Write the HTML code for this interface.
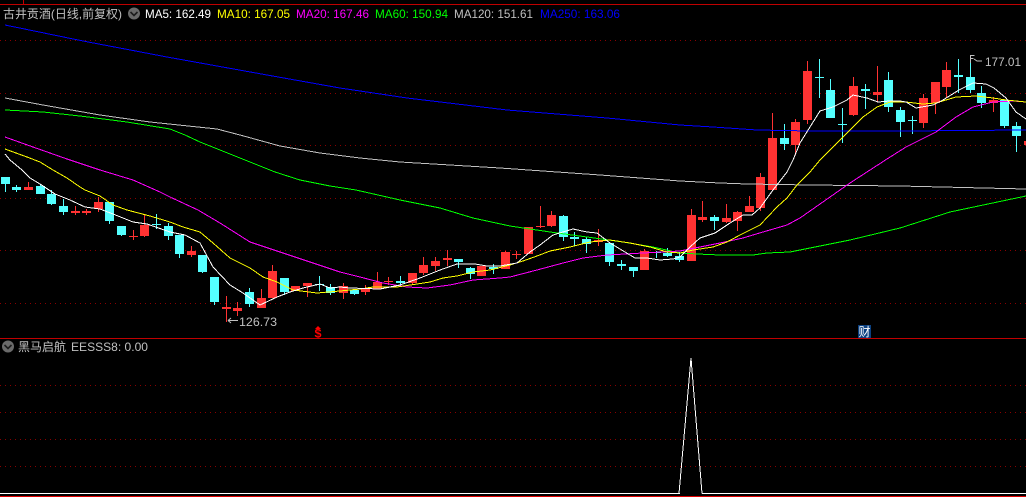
<!DOCTYPE html>
<html lang="zh">
<head>
<meta charset="utf-8">
<title>古井贡酒</title>
<style>
html,body{margin:0;padding:0;background:#000;width:1026px;height:497px;overflow:hidden}
svg{display:block;position:absolute;left:0;top:0}
text{font-family:"Liberation Sans","WenQuanYi Zen Hei","Noto Sans CJK SC",sans-serif;font-size:12px;white-space:pre}
.l{fill:none;stroke-width:1;shape-rendering:crispEdges}
</style>
</head>
<body>
<svg width="1026" height="497" viewBox="0 0 1026 497" xmlns="http://www.w3.org/2000/svg">
<rect width="1026" height="497" fill="#000"/>

<g stroke="#8a0000" stroke-width="1" stroke-dasharray="1 4" shape-rendering="crispEdges">
<path d="M0 40.5H1026M0 93.5H1026M0 145.5H1026M0 198.5H1026M0 250.5H1026M0 303.5H1026"/>
<path d="M0 385.5H1026M0 412.5H1026M0 439.5H1026M0 466.5H1026"/>
</g>

<g fill="#c00000" shape-rendering="crispEdges">
<rect x="0" y="4" width="1026" height="1"/>
<rect x="23" y="0" width="1" height="4"/>
<rect x="0" y="338" width="1026" height="1"/>
</g>

<path shape-rendering="crispEdges" fill="#54ffff" d="M1 177h9v7h-9zM5 177h1v15h-1zM12 187h9v3h-9zM16 185h1v7h-1zM36 186h9v8h-9zM40 185h1v9h-1zM47 194h9v10h-9zM51 190h1v15h-1zM59 206h9v6h-9zM63 199h1v16h-1zM105 202h9v19h-9zM109 202h1v22h-1zM117 226h9v9h-9zM121 226h1v10h-1zM152 224h9v1h-9zM156 214h1v15h-1zM164 226h9v10h-9zM168 223h1v17h-1zM175 235h9v19h-9zM179 235h1v23h-1zM198 255h9v17h-9zM202 255h1v18h-1zM210 277h9v25h-9zM214 277h1v28h-1zM245 292h9v12h-9zM249 288h1v19h-1zM280 278h9v14h-9zM284 278h1v17h-1zM315 284h9v1h-9zM319 276h1v15h-1zM326 287h9v6h-9zM330 284h1v11h-1zM350 290h9v4h-9zM354 290h1v5h-1zM396 281h9v2h-9zM400 276h1v9h-1zM454 259h9v3h-9zM458 259h1v9h-1zM466 268h9v6h-9zM470 267h1v12h-1zM489 267h9v2h-9zM493 264h1v10h-1zM559 216h9v21h-9zM563 215h1v26h-1zM570 237h9v2h-9zM574 232h1v14h-1zM582 239h9v5h-9zM586 237h1v16h-1zM605 243h9v19h-9zM609 243h1v23h-1zM617 264h9v2h-9zM621 260h1v10h-1zM629 267h9v4h-9zM633 267h1v10h-1zM652 252h9v1h-9zM656 251h1v7h-1zM663 253h9v3h-9zM667 248h1v9h-1zM675 256h9v4h-9zM679 252h1v10h-1zM710 217h9v4h-9zM714 215h1v15h-1zM780 138h9v6h-9zM784 124h1v26h-1zM815 77h9v1h-9zM819 59h1v39h-1zM826 90h9v28h-9zM830 79h1v39h-1zM838 124h9v1h-9zM842 108h1v35h-1zM861 89h9v2h-9zM865 84h1v25h-1zM884 80h9v27h-9zM888 72h1v40h-1zM896 110h9v12h-9zM900 107h1v30h-1zM908 120h9v1h-9zM912 116h1v18h-1zM954 75h9v2h-9zM958 59h1v34h-1zM966 77h9v13h-9zM970 58h1v35h-1zM977 93h9v10h-9zM981 86h1v22h-1zM1000 100h9v26h-9zM1004 100h1v28h-1zM1012 126h9v10h-9zM1016 122h1v30h-1z"/>

<path shape-rendering="crispEdges" fill="#ff3232" d="M24 187h9v3h-9zM28 182h1v8h-1zM71 211h9v2h-9zM75 206h1v9h-1zM82 211h9v2h-9zM86 209h1v6h-1zM94 202h9v7h-9zM98 197h1v15h-1zM129 236h9v1h-9zM133 230h1v10h-1zM140 225h9v11h-9zM144 215h1v22h-1zM187 251h9v4h-9zM191 246h1v11h-1zM222 307h9v2h-9zM226 296h1v26h-1zM233 308h9v3h-9zM237 302h1v14h-1zM257 298h9v10h-9zM261 289h1v19h-1zM268 271h9v27h-9zM272 265h1v33h-1zM291 286h9v5h-9zM303 283h9v3h-9zM307 283h1v14h-1zM339 286h9v7h-9zM343 283h1v16h-1zM361 289h9v3h-9zM365 285h1v10h-1zM373 282h9v7h-9zM377 272h1v17h-1zM384 281h9v1h-9zM388 277h1v8h-1zM408 273h9v10h-9zM412 273h1v12h-1zM419 265h9v8h-9zM423 257h1v18h-1zM431 261h9v5h-9zM435 257h1v14h-1zM443 258h9v2h-9zM447 250h1v16h-1zM477 266h9v10h-9zM501 252h9v17h-9zM505 251h1v18h-1zM512 254h9v1h-9zM516 251h1v8h-1zM524 227h9v27h-9zM536 226h9v1h-9zM540 206h1v22h-1zM547 215h9v11h-9zM551 211h1v16h-1zM594 240h9v2h-9zM598 229h1v17h-1zM640 251h9v19h-9zM644 249h1v21h-1zM687 215h9v46h-9zM691 209h1v52h-1zM698 217h9v3h-9zM702 201h1v21h-1zM722 218h9v4h-9zM726 204h1v19h-1zM733 212h9v9h-9zM737 211h1v20h-1zM745 206h9v6h-9zM749 196h1v16h-1zM756 177h9v31h-9zM760 173h1v38h-1zM768 138h9v52h-9zM772 113h1v77h-1zM791 122h9v23h-9zM795 119h1v36h-1zM803 71h9v49h-9zM807 61h1v63h-1zM849 86h9v29h-9zM853 77h1v39h-1zM873 92h9v3h-9zM877 66h1v36h-1zM919 98h9v25h-9zM923 94h1v34h-1zM931 82h9v21h-9zM935 82h1v32h-1zM942 70h9v17h-9zM946 62h1v36h-1zM989 100h9v3h-9zM993 97h1v15h-1zM1024 141h9v4h-9z"/>

<polyline class="l" stroke="#0000ff" points="5,25 83,41 167,57 267,75 340,88 407,98 507,110 607,118 680,125 713,127 757,130 810,131 900,131 1026,130"/>
<polyline class="l" stroke="#c0c0c0" points="5,98 43,105 100,115 150,122 217,129 240,135 280,146 320,153 360,158 400,162 450,165 500,168 600,175 680,181 720,183 747,184 810,185 900,186 1026,189"/>
<polyline class="l" stroke="#00ff00" points="5,110 43,112 80,116 127,122 170,129 185,135 200,142 225,152 250,162 275,172 300,180 330,186 356,190 400,200 440,208 473,218 510,226 530,229 557,233 587,237 623,242 653,247 680,253 697,254 720,255 753,255 767,253 790,252 810,248 850,240 900,228 950,212 1026,196"/>
<polyline class="l" stroke="#ff00ff" points="5,137 33,147 67,159 100,170 133,180 160,192 170,197 198,210 220,223 250,242 280,252 310,262 340,272 360,277 383,283 407,287 427,288 450,285 473,280 500,278 510,277 537,270 563,263 583,258 607,255 643,253 680,251 700,247 720,243 743,238 763,232 787,225 800,218 810,211 830,197 850,183 887,159 906,147 936,132 956,117 973,107 993,102 1013,101 1026,102"/>
<polyline class="l" stroke="#ffff00" points="5,149 27,157 40,162 53,170 67,178 80,187 85,190 100,196 113,205 127,210 150,216 170,222 183,227 200,232 213,243 230,258 250,268 263,277 277,282 293,290 317,293 340,291 360,289 373,287 397,287 417,284 430,282 443,278 457,276 473,272 490,270 510,265 523,261 537,256 550,251 570,247 590,242 610,240 630,243 650,247 667,252 680,253 693,250 713,247 727,242 740,235 760,225 777,207 787,198 797,185 810,172 820,160 840,140 850,130 863,117 877,107 890,102 906,102 923,104 936,103 956,97 976,96 993,98 1006,100 1026,102"/>
<polyline class="l" stroke="#ffffff" points="5,154 10,160 22,170 30,178 40,184 55,194 70,200 85,207 100,209 113,214 133,222 147,224 170,232 185,235 200,243 213,267 230,285 243,293 260,305 277,297 290,292 303,288 320,284 330,288 340,287 350,288 380,289 400,285 420,278 440,270 457,264 475,264 487,266 500,266 517,263 530,252 540,245 553,235 573,229 587,232 597,233 610,243 625,252 635,258 647,258 660,260 673,259 680,257 690,247 700,238 715,233 730,223 743,215 752,215 760,208 773,190 787,172 793,160 800,143 810,127 820,111 833,107 847,100 853,95 867,98 878,102 890,101 900,101 906,102 916,108 933,105 943,100 959,90 973,83 986,84 994,88 1006,98 1016,112 1026,119"/>

<text x="3" y="18" fill="#c0c0c0" textLength="119" lengthAdjust="spacingAndGlyphs">古井贡酒(日线,前复权)</text>
<circle cx="134" cy="13.500" r="6" fill="#6a6a6a"/>
<path d="M130.500 12l3.500 3.500 3.500-3.500" fill="none" stroke="#1c1c1c" stroke-width="1.600"/>
<text x="145" y="18" fill="#ffffff" textLength="66" lengthAdjust="spacingAndGlyphs">MA5: 162.49</text>
<text x="217" y="18" fill="#ffff00" textLength="73" lengthAdjust="spacingAndGlyphs">MA10: 167.05</text>
<text x="296" y="18" fill="#ff00ff" textLength="73" lengthAdjust="spacingAndGlyphs">MA20: 167.46</text>
<text x="375" y="18" fill="#00ff00" textLength="73" lengthAdjust="spacingAndGlyphs">MA60: 150.94</text>
<text x="454" y="18" fill="#c0c0c0" textLength="79" lengthAdjust="spacingAndGlyphs">MA120: 151.61</text>
<text x="540" y="18" fill="#0000ff" textLength="80" lengthAdjust="spacingAndGlyphs">MA250: 163.06</text>

<path d="M228 320.500H238M228 320.500l3-2.500M228 320.500l3 2.500" fill="none" stroke="#c0c0c0" stroke-width="1"/>
<text x="239" y="326" fill="#c0c0c0" textLength="38" lengthAdjust="spacingAndGlyphs">126.73</text>

<path d="M970.500 55v8M970.500 55.500h4M970.500 58.500h3M974 59l3 2h5" fill="none" stroke="#c0c0c0" stroke-width="1"/>
<text x="985" y="66" fill="#c0c0c0" textLength="36" lengthAdjust="spacingAndGlyphs">177.01</text>

<path d="M318 326l-3 3h6z" fill="#ff0000"/>
<text x="314.500" y="337.500" fill="#ff0000" font-weight="bold" textLength="7" lengthAdjust="spacingAndGlyphs" style="font-size:12px">$</text>

<rect x="858" y="325" width="13" height="13" fill="#0b4080"/>
<text x="858.500" y="336" fill="#ffffff">财</text>

<circle cx="8" cy="346.500" r="6" fill="#6a6a6a"/>
<path d="M4.500 345l3.500 3.500 3.500-3.500" fill="none" stroke="#1c1c1c" stroke-width="1.600"/>
<text x="18" y="351" fill="#c0c0c0" textLength="48" lengthAdjust="spacingAndGlyphs">黑马启航</text>
<text x="71" y="351" fill="#c0c0c0" textLength="77" lengthAdjust="spacingAndGlyphs">EESSS8: 0.00</text>

<polyline class="l" stroke="#ffffff" points="679,493.500 691,358 702,493.500"/>
<rect x="0" y="493" width="680" height="1" fill="#ffffff" shape-rendering="crispEdges"/>
<rect x="702" y="493" width="324" height="1" fill="#ffffff" shape-rendering="crispEdges"/>
<rect x="0" y="496" width="1026" height="1" fill="#e00000" shape-rendering="crispEdges"/>
</svg>
</body>
</html>
